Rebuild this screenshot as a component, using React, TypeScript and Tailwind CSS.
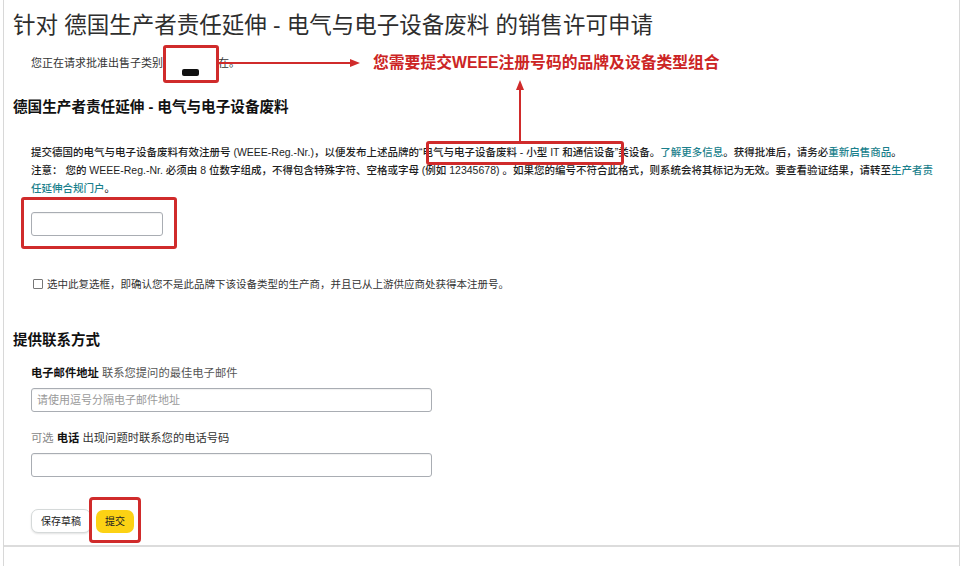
import React from 'react';

// Annotated screenshot of the WEEE sales-approval form.
const font = "font-['Liberation_Sans','Noto_Sans_CJK_SC',sans-serif]";

function Link({ children }: { children: React.ReactNode }) {
  return <span className="text-[#1a7f8c]">{children}</span>;
}

function TextInput({ placeholder, width }: { placeholder?: string; width: string }) {
  return (
    <div
      className={`${width} h-[24px] rounded-[3px] border border-[#a9adb3] bg-white pl-[5px] text-[11px] leading-[22px] text-[#9a9a9a] shadow-[inset_0_1px_1px_rgba(0,0,0,0.06)]`}
    >
      {placeholder}
    </div>
  );
}

function Annotations() {
  return (
    <>
      {/* red box over the hidden sub-category */}
      <div className="absolute left-[163px] top-[45px] h-[38px] w-[56px] rounded-[3px] border-[3px] border-[#d02b2b]" />
      <div className="absolute left-[182px] top-[69px] h-[7px] w-[17px] rounded-[2px] bg-[#111]" />

      <svg className="absolute left-0 top-0" width="961" height="566" fill="none">
        <line x1="219" y1="63" x2="352" y2="63" stroke="#d02b2b" strokeWidth="2" />
        <polygon points="360,63 350,59 350,67" fill="#d02b2b" />
        <line x1="520" y1="142" x2="520" y2="88" stroke="#d02b2b" strokeWidth="2" />
        <polygon points="520,80 516,90 524,90" fill="#d02b2b" />
      </svg>

      <div className="absolute left-[373px] top-[52px] text-[15.8px] font-bold leading-[22px] text-[#cc2424]">
        您需要提交WEEE注册号码的品牌及设备类型组合
      </div>

      {/* box around the device category */}
      <div className="absolute left-[426px] top-[141px] h-[24px] w-[198px] rounded-[3px] border-[3px] border-[#d02b2b]" />
      {/* box around the registration field */}
      <div className="absolute left-[21px] top-[197px] h-[52px] w-[156px] rounded-[3px] border-[3px] border-[#d02b2b]" />
      {/* box around submit */}
      <div className="absolute left-[89px] top-[497px] h-[46px] w-[52px] rounded-[4px] border-[3px] border-[#d02b2b]" />
    </>
  );
}

export default function App() {
  return (
    <div className={`relative h-[566px] w-[961px] overflow-hidden bg-white ${font}`}>
      <div className="ml-[3px] h-[566px] w-[957px] border-l border-r border-[#d8d8d8]">
        <div className="h-[547px] border-b-2 border-[#dcdcdc] pl-[9px] pt-[11px]">
          <h1 className="text-[22.5px] leading-[30px] text-[#2e2e2e]">
            针对 德国生产者责任延伸 - 电气与电子设备废料 的销售许可申请
          </h1>

          <p className="mt-[14px] pl-[18px] text-[11px] leading-[16px] text-[#333]">
            您正在请求批准出售子类别<span className="inline-block w-[55px]" />在。
          </p>

          <h2 className="mt-[26px] text-[14.6px] font-bold leading-[20px] text-[#111]">
            德国生产者责任延伸 - 电气与电子设备废料
          </h2>

          <div className="pl-[18px]">
            <p className="mt-[26px] whitespace-nowrap text-[10.5px] font-medium leading-[18px] text-[#1e1e1e]">
              提交德国的电气与电子设备废料有效注册号 (WEEE-Reg.-Nr.)，以便发布上述品牌的“电气与电子设备废料 - 小型 IT
              和通信设备”类设备。<Link>了解更多信息</Link>。获得批准后，请务必<Link>重新启售商品</Link>。
              <br />
              注意： 您的 WEEE-Reg.-Nr. 必须由 8 位数字组成，不得包含特殊字符、空格或字母 (例如 12345678)
              。如果您的编号不符合此格式，则系统会将其标记为无效。要查看验证结果，请转至
              <Link>
                生产者责
                <br />
                任延伸合规门户
              </Link>
              。
            </p>

            <div className="mt-[15px]">
              <TextInput width="w-[132px]" />
            </div>

            <label className="mt-[40px] flex items-center gap-[4px] pl-[2px] text-[10.5px] leading-[16px] text-[#333]">
              <span className="h-[10px] w-[10px] rounded-[1px] border border-[#777] bg-white" />
              选中此复选框，即确认您不是此品牌下该设备类型的生产商，并且已从上游供应商处获得本注册号。
            </label>
          </div>

          <h2 className="mt-[38px] text-[14.5px] font-bold leading-[20px] text-[#111]">提供联系方式</h2>

          <div className="pl-[18px]">
            <p className="mt-[15px] text-[11.3px] leading-[16px] text-[#555]">
              <span className="font-bold text-[#111]">电子邮件地址</span> 联系您提问的最佳电子邮件
            </p>
            <div className="mt-[7px]">
              <TextInput width="w-[401px]" placeholder="请使用逗号分隔电子邮件地址" />
            </div>

            <p className="mt-[18px] text-[11.3px] leading-[16px] text-[#333]">
              <span className="text-[#888]">可选</span> <span className="font-bold text-[#111]">电话</span>{' '}
              出现问题时联系您的电话号码
            </p>
            <div className="mt-[7px]">
              <TextInput width="w-[401px]" />
            </div>

            <div className="mt-[32px] flex items-center gap-[5px]">
              <button className="h-[24px] rounded-[7px] border border-[#d5d9d9] bg-white px-[9px] text-[10px] text-[#222] shadow-[0_1px_2px_rgba(15,17,17,0.12)]">
                保存草稿
              </button>
              <button className="h-[23px] rounded-[7px] bg-[#fcd214] px-[9px] text-[10px] text-[#222]">提交</button>
            </div>
          </div>
        </div>
      </div>

      <Annotations />
    </div>
  );
}
